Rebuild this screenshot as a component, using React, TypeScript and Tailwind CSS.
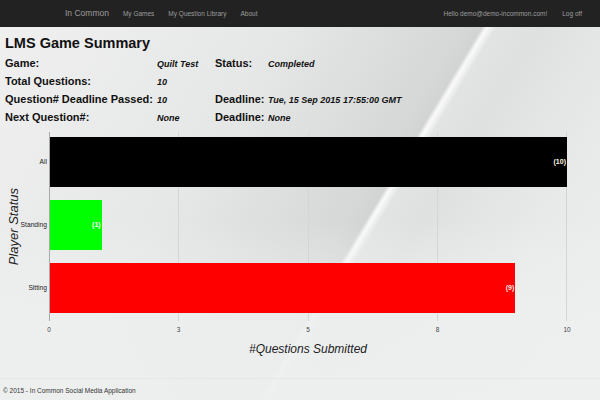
const bars = [
  { label: "All", value: 10, color: "bg-[#000000]", text: "text-[#fffbe8]" },
  { label: "Standing", value: 1, color: "bg-[#00ff00]", text: "text-white" },
  { label: "Sitting", value: 9, color: "bg-[#ff0000]", text: "text-[#ffe8e8]" },
];

const ticks = [
  { label: "0", at: 0 },
  { label: "3", at: 25 },
  { label: "5", at: 50 },
  { label: "8", at: 75 },
  { label: "10", at: 100 },
];

function NavBar() {
  return (
    <nav className="flex h-[27px] items-center bg-[#222222] text-[#9d9d9d]">
      <span className="ml-[65px] text-[8.5px]">In Common</span>
      <div className="ml-[14px] flex gap-[14px] text-[6.5px]">
        <span>My Games</span>
        <span>My Question Library</span>
        <span>About</span>
      </div>
      <div className="ml-auto mr-[18px] flex gap-[15px] text-[6.5px]">
        <span>Hello demo@demo-incommon.com!</span>
        <span>Log off</span>
      </div>
    </nav>
  );
}

function Summary() {
  return (
    <div className="px-[5px] pt-[8px] text-[#111]">
      <h1 className="text-[14.5px] font-bold leading-[17px]">LMS Game Summary</h1>
      <div className="mt-[3px] grid grid-cols-[152px_58px_53px_auto] items-baseline leading-[17px]">
        <span className="text-[11px] font-bold">Game:</span>
        <span className="text-[9px] font-bold italic">Quilt Test</span>
        <span className="text-[11px] font-bold">Status:</span>
        <span className="text-[9px] font-bold italic">Completed</span>

        <span className="text-[11px] font-bold">Total Questions:</span>
        <span className="text-[9px] font-bold italic">10</span>
        <span />
        <span />

        <span className="text-[11px] font-bold">Question# Deadline Passed:</span>
        <span className="text-[9px] font-bold italic">10</span>
        <span className="text-[11px] font-bold">Deadline:</span>
        <span className="text-[9px] font-bold italic">Tue, 15 Sep 2015 17:55:00 GMT</span>

        <span className="text-[11px] font-bold">Next Question#:</span>
        <span className="text-[9px] font-bold italic">None</span>
        <span className="text-[11px] font-bold">Deadline:</span>
        <span className="text-[9px] font-bold italic">None</span>
      </div>
    </div>
  );
}

function Chart() {
  return (
    <div className="mt-[5px]">
      <div className="flex">
        <div className="flex w-[28px] items-center justify-center">
          <span className="rotate-180 text-[13px] italic text-[#222] [writing-mode:vertical-rl]">
            Player Status
          </span>
        </div>
        <div className="flex w-[21px] flex-col gap-[13px] pt-[5px] pr-[2px] text-right text-[6.7px] text-[#222]">
          {bars.map((b) => (
            <div key={b.label} className="flex h-[50px] items-center justify-end whitespace-nowrap">
              {b.label}
            </div>
          ))}
        </div>
        <div className="relative h-[189px] w-[518px] border-l border-[#aaaaaa]">
          {ticks.slice(1).map((t) => (
            <div
              key={t.label}
              className="absolute top-0 bottom-0 w-px bg-[#d4d6d6]"
              style={{ left: `calc(${t.at}% - 1px)` }}
            />
          ))}
          <div className="relative flex flex-col gap-[13px] pt-[5px]">
            {bars.map((b) => (
              <div key={b.label} className="h-[50px]">
                <div
                  className={`flex h-full items-center justify-end pr-[1px] ${b.color}`}
                  style={{ width: `${b.value * 10}%` }}
                >
                  <span className={`text-[7px] font-bold ${b.text}`}>({b.value})</span>
                </div>
              </div>
            ))}
          </div>
        </div>
      </div>
      <div className="relative ml-[49px] h-[21px] w-[518px] text-[6.5px] text-[#444]">
        {ticks.map((t) => (
          <span
            key={t.label}
            className="absolute top-[4px] -translate-x-1/2 leading-[10px]"
            style={{ left: `${t.at}%` }}
          >
            {t.label}
          </span>
        ))}
      </div>
      <div className="ml-[49px] w-[518px] text-center text-[12px] italic leading-[14px] text-[#222]">
        #Questions Submitted
      </div>
    </div>
  );
}

export default function App() {
  return (
    <div className="min-h-[400px] w-full overflow-hidden bg-[linear-gradient(180deg,#eef0f000_55%,#eef0f0e0_78%,#eef0f0f0_100%),linear-gradient(121deg,#f0f0f0_0%,#e6e7e7_35%,#d6d8d8_57%,#d2d4d4_59.3%,#fafafa_59.9%,#e2e4e4_61%,#dfe1e1_66%,#e8eaea_80%,#eef0f0_100%)] font-['Liberation_Sans',Arial,sans-serif]">
      <NavBar />
      <Summary />
      <Chart />
      <footer className="mt-[22px] border-t border-[#e6e8e8] px-[3px] pt-[7px]">
        <p className="text-[6.5px] leading-[10px] text-[#333]">
          © 2015 - In Common Social Media Application
        </p>
      </footer>
    </div>
  );
}
